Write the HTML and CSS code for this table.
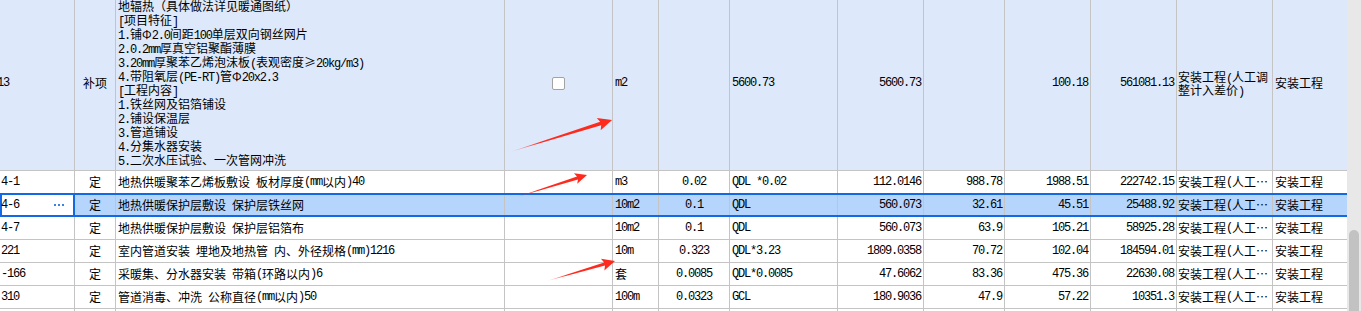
FILE: index.html
```html
<!DOCTYPE html>
<html lang="zh-CN">
<head>
<meta charset="utf-8">
<title>清单</title>
<link rel="stylesheet" href="styles.css">
</head>
<body>
<div class="screen">
  <div class="sheet">
    <div class="row big">
      <div class="cell code"><span class="a cut">13</span></div>
      <div class="cell c">补项</div>
      <div class="cell desc">
        <div class="lines">
          <div>地辐热（具体做法详见暖通图纸）</div>
          <div><span class="a">[</span>项目特征<span class="a">]</span></div>
          <div><span class="a">1.</span>铺Φ<span class="a">2.0</span>间距<span class="a">100</span>单层双向钢丝网片</div>
          <div><span class="a">2.0.2mm</span>厚真空铝聚酯薄膜</div>
          <div><span class="a">3.20mm</span>厚聚苯乙烯泡沫板<span class="a">(</span>表观密度≥<span class="a">20kg/m3)</span></div>
          <div><span class="a">4.</span>带阻氧层<span class="a">(PE-RT)</span>管Φ<span class="a">20x2.3</span></div>
          <div><span class="a">[</span>工程内容<span class="a">]</span></div>
          <div><span class="a">1.</span>铁丝网及铝箔铺设</div>
          <div><span class="a">2.</span>铺设保温层</div>
          <div><span class="a">3.</span>管道铺设</div>
          <div><span class="a">4.</span>分集水器安装</div>
          <div><span class="a">5.</span>二次水压试验、一次管网冲洗</div>
        </div>
      </div>
      <div class="cell c"><span class="chk"></span></div>
      <div class="cell l"><span class="a">m2</span></div>
      <div class="cell c"></div>
      <div class="cell l"><span class="a">5600.73</span></div>
      <div class="cell r"><span class="a">5600.73</span></div>
      <div class="cell r"></div>
      <div class="cell r"><span class="a">100.18</span></div>
      <div class="cell r"><span class="a">561081.13</span></div>
      <div class="cell wrap"><div class="wraptext"><div>安装工程<span class="a">(</span>人工调</div><div>整计入差价<span class="a">)</span></div></div></div>
      <div class="cell l last">安装工程</div>
    </div>

    <div class="row">
      <div class="cell code"><span class="a">4-1</span></div>
      <div class="cell c">定</div>
      <div class="cell l">地热供暖聚苯乙烯板敷设<span class="a"> </span>板材厚度<span class="a">(mm</span>以内<span class="a">)40</span></div>
      <div class="cell"></div>
      <div class="cell l"><span class="a">m3</span></div>
      <div class="cell c"><span class="a">0.02</span></div>
      <div class="cell l"><span class="a">QDL *0.02</span></div>
      <div class="cell r"><span class="a">112.0146</span></div>
      <div class="cell r"><span class="a">988.78</span></div>
      <div class="cell r"><span class="a">1988.51</span></div>
      <div class="cell r"><span class="a">222742.15</span></div>
      <div class="cell l tight">安装工程<span class="a">(</span>人工⋯</div>
      <div class="cell l last">安装工程</div>
    </div>

    <div class="row sel">
      <div class="cell code active"><span class="a">4-6</span><svg class="more" width="10" height="2" viewBox="0 0 10 2"><rect x="0" y="0" width="2" height="2"/><rect x="4" y="0" width="2" height="2"/><rect x="8" y="0" width="2" height="2"/></svg></div>
      <div class="cell c">定</div>
      <div class="cell l">地热供暖保护层敷设<span class="a"> </span>保护层铁丝网</div>
      <div class="cell"></div>
      <div class="cell l"><span class="a">10m2</span></div>
      <div class="cell c"><span class="a">0.1</span></div>
      <div class="cell l"><span class="a">QDL</span></div>
      <div class="cell r"><span class="a">560.073</span></div>
      <div class="cell r"><span class="a">32.61</span></div>
      <div class="cell r"><span class="a">45.51</span></div>
      <div class="cell r"><span class="a">25488.92</span></div>
      <div class="cell l tight">安装工程<span class="a">(</span>人工⋯</div>
      <div class="cell l last">安装工程</div>
    </div>

    <div class="row">
      <div class="cell code"><span class="a">4-7</span></div>
      <div class="cell c">定</div>
      <div class="cell l">地热供暖保护层敷设<span class="a"> </span>保护层铝箔布</div>
      <div class="cell"></div>
      <div class="cell l"><span class="a">10m2</span></div>
      <div class="cell c"><span class="a">0.1</span></div>
      <div class="cell l"><span class="a">QDL</span></div>
      <div class="cell r"><span class="a">560.073</span></div>
      <div class="cell r"><span class="a">63.9</span></div>
      <div class="cell r"><span class="a">105.21</span></div>
      <div class="cell r"><span class="a">58925.28</span></div>
      <div class="cell l tight">安装工程<span class="a">(</span>人工⋯</div>
      <div class="cell l last">安装工程</div>
    </div>

    <div class="row">
      <div class="cell code"><span class="a">221</span></div>
      <div class="cell c">定</div>
      <div class="cell l">室内管道安装<span class="a"> </span>埋地及地热管<span class="a"> </span>内、外径规格<span class="a">(mm)1216</span></div>
      <div class="cell"></div>
      <div class="cell l"><span class="a">10m</span></div>
      <div class="cell c"><span class="a">0.323</span></div>
      <div class="cell l"><span class="a">QDL*3.23</span></div>
      <div class="cell r"><span class="a">1809.0358</span></div>
      <div class="cell r"><span class="a">70.72</span></div>
      <div class="cell r"><span class="a">102.04</span></div>
      <div class="cell r"><span class="a">184594.01</span></div>
      <div class="cell l tight">安装工程<span class="a">(</span>人工⋯</div>
      <div class="cell l last">安装工程</div>
    </div>

    <div class="row">
      <div class="cell code"><span class="a">-166</span></div>
      <div class="cell c">定</div>
      <div class="cell l">采暖集、分水器安装<span class="a"> </span>带箱<span class="a">(</span>环路以内<span class="a">)6</span></div>
      <div class="cell"></div>
      <div class="cell l">套</div>
      <div class="cell c"><span class="a">0.0085</span></div>
      <div class="cell l"><span class="a">QDL*0.0085</span></div>
      <div class="cell r"><span class="a">47.6062</span></div>
      <div class="cell r"><span class="a">83.36</span></div>
      <div class="cell r"><span class="a">475.36</span></div>
      <div class="cell r"><span class="a">22630.08</span></div>
      <div class="cell l tight">安装工程<span class="a">(</span>人工⋯</div>
      <div class="cell l last">安装工程</div>
    </div>

    <div class="row">
      <div class="cell code"><span class="a">310</span></div>
      <div class="cell c">定</div>
      <div class="cell l">管道消毒、冲洗<span class="a"> </span>公称直径<span class="a">(mm</span>以内<span class="a">)50</span></div>
      <div class="cell"></div>
      <div class="cell l"><span class="a">100m</span></div>
      <div class="cell c"><span class="a">0.0323</span></div>
      <div class="cell l"><span class="a">GCL</span></div>
      <div class="cell r"><span class="a">180.9036</span></div>
      <div class="cell r"><span class="a">47.9</span></div>
      <div class="cell r"><span class="a">57.22</span></div>
      <div class="cell r"><span class="a">10351.3</span></div>
      <div class="cell l tight">安装工程<span class="a">(</span>人工⋯</div>
      <div class="cell l last">安装工程</div>
    </div>

    <div class="row">
      <div class="cell code"></div>
      <div class="cell"></div>
      <div class="cell"></div>
      <div class="cell"></div>
      <div class="cell"></div>
      <div class="cell"></div>
      <div class="cell"></div>
      <div class="cell"></div>
      <div class="cell"></div>
      <div class="cell"></div>
      <div class="cell"></div>
      <div class="cell"></div>
      <div class="cell last"></div>
    </div>
  </div>

  <div class="vscroll"><div class="thumb"></div></div>

  <svg class="marks" width="1361" height="311" viewBox="0 0 1361 311">
    <defs>
      <linearGradient id="fade" x1="0" y1="0" x2="1" y2="0">
        <stop offset="0" stop-color="#ff2a1e" stop-opacity="0.15"/>
        <stop offset="0.3" stop-color="#ff2a1e" stop-opacity="1"/>
        <stop offset="1" stop-color="#ff2a1e" stop-opacity="1"/>
      </linearGradient>
    </defs>
    <g transform="translate(510 152) rotate(-17.42)">
      <polygon fill="url(#fade)" points="0,0 95,-1.8 93,-6.5 107,0 93,6.5 95,1.8"/>
    </g>
    <g transform="translate(517 197) rotate(-17.45)">
      <polygon fill="url(#fade)" points="0,0 63.4,-1.6 61.4,-5.5 73.4,0 61.4,5.5 63.4,1.6"/>
    </g>
    <g transform="translate(547 281) rotate(-16.4)">
      <polygon fill="url(#fade)" points="0,0 60,-1.6 58,-6 70.9,0 58,6 60,1.6"/>
    </g>
  </svg>
</div>
</body>
</html>
```

FILE: styles.css
```css
html, body {
  margin: 0;
  padding: 0;
  background: #ffffff;
}

body {
  width: 1361px;
  height: 311px;
  overflow: hidden;
  font-family: "Noto Sans CJK SC", "Noto Sans", sans-serif;
  font-size: 12px;
  color: #000;
}

.screen {
  position: relative;
  display: flex;
  width: 1361px;
  height: 311px;
  overflow: hidden;
}

.sheet {
  width: 1347px;
  flex: none;
  margin-top: -4px;
  display: flex;
  flex-direction: column;
}

.row {
  display: grid;
  grid-template-columns: 75px 41px 389px 108px 46px 71px 108px 86px 81px 86px 86px 96px 74px;
  height: 23px;
  flex: none;
  background: #ffffff;
}

.row.big {
  height: 175px;
  background: #dde9fb;
}

.row.sel {
  position: relative;
  background: #b6d5fc;
}

.row.sel::after {
  content: "";
  position: absolute;
  left: 0;
  right: 0;
  top: -1px;
  bottom: 0;
  border-top: 2px solid #1169e6;
  border-bottom: 2px solid #1169e6;
  pointer-events: none;
}

.cell {
  display: flex;
  align-items: center;
  min-width: 0;
  overflow: hidden;
  white-space: nowrap;
  border-right: 1px solid #c4c4c4;
  border-bottom: 1px solid #c4c4c4;
  padding: 0 2px;
  line-height: 14px;
}

.cell.last {
  border-right: none;
}

.cell.code {
  padding-left: 1px;
}

.cell.active {
  background: #ffffff;
  border-right-color: #1169e6;
  box-shadow: inset 2px 0 0 #1169e6, inset -1px 0 0 #1169e6;
}

.more {
  display: block;
  margin-left: auto;
  margin-right: 8px;
  fill: #3a83e2;
}

.c {
  justify-content: center;
}

.l {
  justify-content: flex-start;
}

.r {
  justify-content: flex-end;
  padding-right: 2px;
}

.tight {
  padding-left: 1px;
}

.a {
  font-family: "Liberation Mono", "DejaVu Sans Mono", monospace;
  font-size: 12px;
  letter-spacing: -1.2px;
  line-height: 10px;
  white-space: pre;
}

.cut {
  margin-left: -4px;
}

.desc {
  padding-left: 2px;
}

.lines {
  display: flex;
  flex-direction: column;
}

.lines > div {
  height: 14px;
  line-height: 14px;
}

.wrap {
  padding-left: 1px;
  padding-right: 0;
}

.wraptext > div {
  height: 13px;
  line-height: 13px;
}

.chk {
  display: block;
  width: 11px;
  height: 11px;
  border: 1px solid #a3a3a3;
  border-radius: 2px;
  background: #ffffff;
}

.vscroll {
  width: 14px;
  flex: none;
  background: #e8e8e8;
  display: flex;
  flex-direction: column;
  padding: 230px 2px 0 2px;
  box-sizing: border-box;
}

.thumb {
  flex: 1;
  width: 10px;
  border-radius: 5px 5px 0 0;
  background: #c2c2c2;
}

.marks {
  position: absolute;
  left: 0;
  top: 0;
  pointer-events: none;
}
```
